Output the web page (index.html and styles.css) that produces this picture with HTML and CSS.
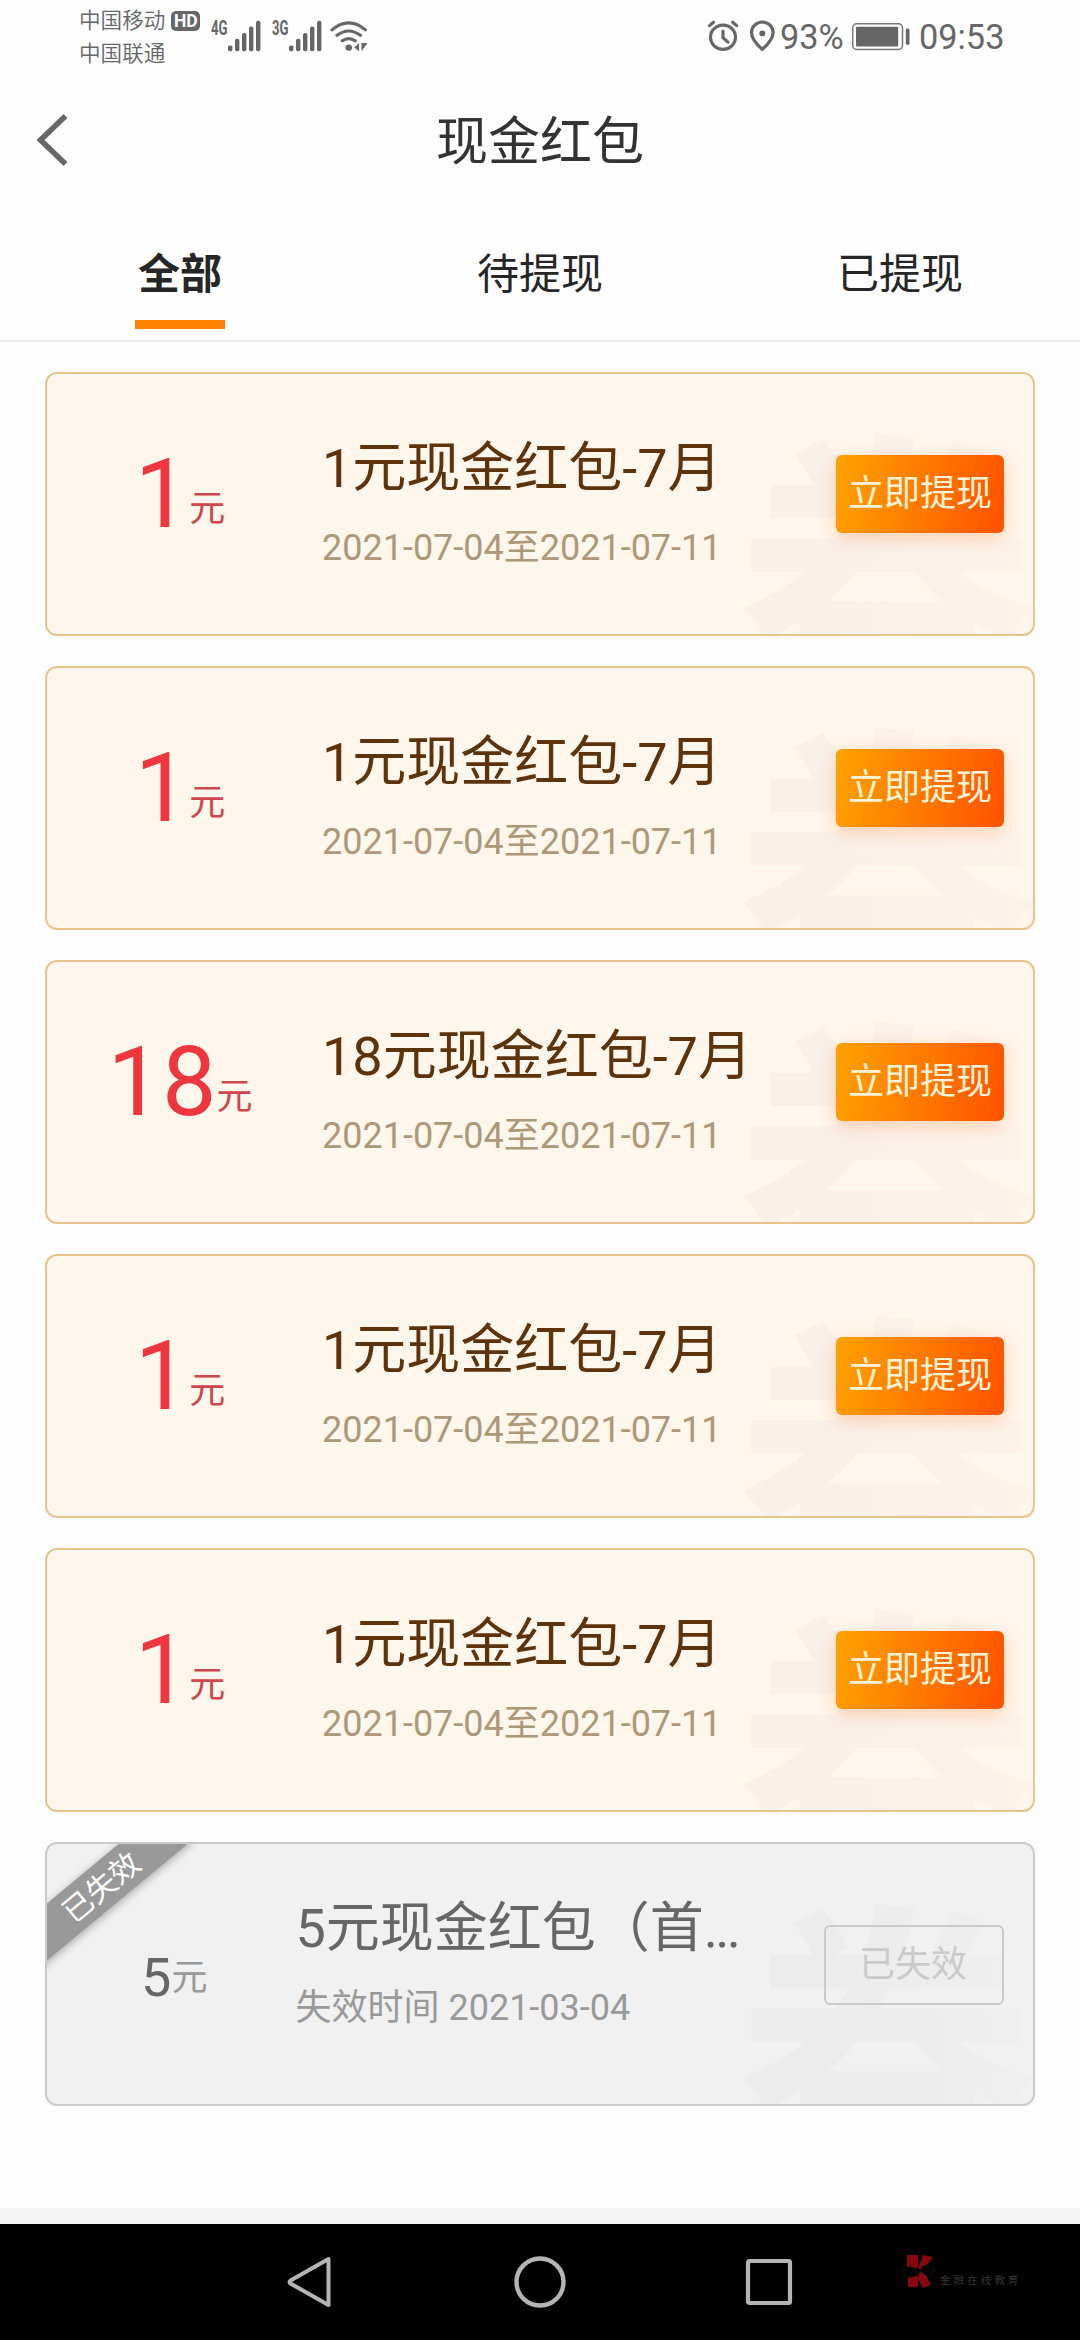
FILE: index.html
```html
<!DOCTYPE html>
<html lang="zh-CN">
<head>
<meta charset="utf-8">
<title>现金红包</title>
<link rel="stylesheet" href="styles.css">
</head>
<body>
<div class="screen">
  <header class="status">
    <div class="carriers">
      <div class="carrier">中国移动<span class="hd">HD</span></div>
      <div class="carrier">中国联通</div>
    </div>
    <svg class="signals" width="160" height="36" viewBox="210 20.66 160 37.2" preserveAspectRatio="none">
      <g fill="#666">
        <text class="net" x="211" y="35.8" textLength="16.5" lengthAdjust="spacingAndGlyphs">4G</text>
        <text class="net" x="272" y="35.8" textLength="16.5" lengthAdjust="spacingAndGlyphs">3G</text>
        <rect x="228" y="47" width="4.4" height="6" rx="1.8"/><rect x="235" y="40" width="4.4" height="13" rx="1.8"/><rect x="242" y="34" width="4.4" height="19" rx="1.8"/><rect x="249" y="27.5" width="4.4" height="25.5" rx="1.8"/><rect x="256" y="21.5" width="4.4" height="31.5" rx="1.8"/>
        <rect x="289" y="47" width="4.4" height="6" rx="1.8"/><rect x="296" y="40" width="4.4" height="13" rx="1.8"/><rect x="303" y="34" width="4.4" height="19" rx="1.8"/><rect x="310" y="27.5" width="4.4" height="25.5" rx="1.8"/><rect x="317" y="21.5" width="4.4" height="31.5" rx="1.8"/>
        <circle cx="348.7" cy="49.2" r="3.3"/>
        <path d="M354.3 49.2l4.8-4.7v8.5zM361.5 44.500h6l-6 8.500z"/>
      </g>
      <g fill="none" stroke="#666" stroke-width="3.2" stroke-linecap="round">
        <path d="M332 30.800Q348.700 16.500 365.400 30.800M337 36.500Q348.700 27.500 360.400 36.500M342.300 42.200Q348.700 37.500 355.200 42.200"/>
      </g>
    </svg>
    <svg class="indicators" width="72" height="36" viewBox="706 20.66 72 37.2" preserveAspectRatio="none" fill="none" stroke="#666" stroke-width="3.2" stroke-linecap="round">
      <circle cx="723" cy="38.5" r="12.5" stroke-width="3.2"/>
      <path d="M723 32v7l5 4.500"/>
      <path d="M709.500 26.500l4-3.500M736.700 26.500l-4-3.500"/>
      <path d="M762.300 51Q751.500 41 751.500 33.500A10.800 10.800 0 0 1 773.100 33.500Q773.100 41 762.300 51z"/>
      <circle cx="762.300" cy="34.500" r="3" fill="#666" stroke="none"/>
    </svg>
    <span class="percent">93%</span>
    <svg class="battery" width="60" height="28" viewBox="851 23 60 28">
      <rect x="852.7" y="23.8" width="49.8" height="25.6" rx="4" fill="none" stroke="#777" stroke-width="1.5"/>
      <rect x="856" y="26.700" width="42.200" height="19.700" rx="1" fill="#666"/>
      <rect x="905.800" y="28.500" width="3.700" height="16.300" rx="1.500" fill="#666"/>
    </svg>
    <span class="clock">09:53</span>
  </header>

  <nav class="titlebar">
    <svg class="back" width="36" height="58" viewBox="0 0 36 58"><path d="M30.500 5L5.500 29l25 24" fill="none" stroke="#666" stroke-width="5.500"/></svg>
    <h1 class="title">现金红包</h1>
  </nav>

  <div class="tabs">
    <div class="tab active">全部</div>
    <div class="tab">待提现</div>
    <div class="tab">已提现</div>
  </div>

  <main class="list">
    <article class="card">
      <span class="mark">券</span>
      <div class="amount">1<small>元</small></div>
      <div class="info"><h2>1元现金红包-7月</h2><p>2021-07-04至2021-07-11</p></div>
      <button class="btn">立即提现</button>
    </article>
    <article class="card">
      <span class="mark">券</span>
      <div class="amount">1<small>元</small></div>
      <div class="info"><h2>1元现金红包-7月</h2><p>2021-07-04至2021-07-11</p></div>
      <button class="btn">立即提现</button>
    </article>
    <article class="card">
      <span class="mark">券</span>
      <div class="amount">18<small>元</small></div>
      <div class="info"><h2>18元现金红包-7月</h2><p>2021-07-04至2021-07-11</p></div>
      <button class="btn">立即提现</button>
    </article>
    <article class="card">
      <span class="mark">券</span>
      <div class="amount">1<small>元</small></div>
      <div class="info"><h2>1元现金红包-7月</h2><p>2021-07-04至2021-07-11</p></div>
      <button class="btn">立即提现</button>
    </article>
    <article class="card">
      <span class="mark">券</span>
      <div class="amount">1<small>元</small></div>
      <div class="info"><h2>1元现金红包-7月</h2><p>2021-07-04至2021-07-11</p></div>
      <button class="btn">立即提现</button>
    </article>
    <article class="card expired">
      <span class="mark">券</span>
      <span class="ribbon">已失效</span>
      <div class="amount">5<small>元</small></div>
      <div class="info"><h2>5元现金红包（首<span class="dots">...</span></h2><p>失效时间 2021-03-04</p></div>
      <button class="btn">已失效</button>
    </article>
  </main>

  <div class="strip"></div>
  <footer class="navbar">
    <svg width="56" height="56" viewBox="0 0 56 56"><path d="M45.500 5v46L7.500 29.500q-2-1.500 0-3z" fill="none" stroke="#b4b4b4" stroke-width="4" stroke-linejoin="round"/></svg>
    <svg width="56" height="56" viewBox="0 0 56 56"><circle cx="28" cy="28" r="23.500" fill="none" stroke="#b4b4b4" stroke-width="4.400"/></svg>
    <svg width="56" height="56" viewBox="0 0 56 56"><rect x="7" y="7" width="42" height="42" rx="1.500" fill="none" stroke="#b4b4b4" stroke-width="4.200"/></svg>
    <div class="brand">
      <svg width="34" height="36" viewBox="0 0 34 36">
        <path d="M4 1h11v13H4zM20 1l10 2-9 12h-6zM5 23l6-2 4 2v10H5zM16 19l5-2 7 14-8 3-5-9z" fill="#87080c"/>
        <ellipse cx="7" cy="18" rx="6.500" ry="5.200" fill="#000" stroke="#161616"/>
        <ellipse cx="24.500" cy="16" rx="6.500" ry="5" fill="#000" stroke="#161616"/>
      </svg>
      <span>金融在线教育</span>
    </div>
  </footer>
</div>
</body>
</html>
```
FILE: styles.css
```css
* { box-sizing: border-box; }

body {
  margin: 0;
  background: #fff;
  font-family: Roboto, "Noto Sans CJK SC", sans-serif;
  color: #333;
}

h1, h2, p { margin: 0; font-weight: 400; white-space: nowrap; }

.screen {
  display: flex;
  flex-direction: column;
  width: 1080px;
  height: 2340px;
  overflow: hidden;
  background: #fefefe;
}

/* status bar */
.status {
  display: flex;
  align-items: flex-start;
  height: 70px;
  padding: 4px 0 0 79px;
  color: #666;
}

.carriers { width: 131px; font-size: 21.6px; font-weight: 350; }
.carrier { display: flex; align-items: center; height: 33px; line-height: 33px; white-space: nowrap; }

.hd {
  width: 29px;
  height: 20px;
  margin-left: 6px;
  border-radius: 5px;
  background: #666;
  color: #fff;
  font-size: 17.5px;
  font-weight: 700;
  line-height: 20px;
  text-align: center;
}

.net { font: 700 20px Roboto, sans-serif; }
.signals { margin-top: 16px; }
.indicators { margin: 16px 0 0 336px; }

.percent, .clock {
  margin-top: 12px;
  font-size: 34.3px;
  line-height: 42px;
  white-space: nowrap;
}
.percent { width: 71px; padding-left: 2px; }
.battery { margin: 19px 8px 0 2px; }

/* title bar */
.titlebar {
  display: grid;
  grid-template-columns: 200px 1fr 200px;
  align-items: center;
  height: 146px;
}
.back { margin: -7px 0 0 35px; }
.title { font-size: 52px; line-height: 60px; text-align: center; }

/* tabs */
.tabs {
  display: grid;
  grid-template-columns: repeat(3, 1fr);
  justify-items: center;
  height: 124px;
  padding-top: 15px;
  color: #262626;
  font-size: 42px;
  line-height: 88px;
}
.tab { display: flex; justify-content: center; width: 90px; height: 98px; white-space: nowrap; }
.tab.active { border-bottom: 9px solid #ff8200; font-weight: 700; }

/* red packet cards */
.list {
  display: flex;
  flex-direction: column;
  gap: 30px;
  height: 1868px;
  padding: 30px 45px 0;
  border-top: 2px solid #ececec;
}

.card {
  position: relative;
  display: flex;
  align-items: flex-start;
  flex: none;
  height: 264px;
  overflow: hidden;
  border: 2px solid #e9c38c;
  border-radius: 12px;
  background: #fff6ec;
}

.mark {
  position: absolute;
  left: 688px;
  top: 35px;
  background: linear-gradient(90deg, #f9f0ea 30%, #fdf3e9);
  background-clip: text;
  -webkit-background-clip: text;
  color: transparent;
  font: 700 304px/304px "Noto Sans CJK SC", sans-serif;
  transform: scaleY(1.032);
  transform-origin: 0 0;
}

.amount {
  width: 275px;
  padding: 70px 9px 0 0;
  color: #ee363e;
  font-size: 97px;
  line-height: 100px;
  text-align: center;
  white-space: nowrap;
}
.amount small { color: #ce474c; font-size: 36px; line-height: 36px; vertical-align: 6px; }

.info { flex: 1; padding-top: 57px; }
.info h2 { color: #5e320a; font-size: 54px; line-height: 76px; }
.info p { margin-top: 15px; color: #ae9878; font-size: 36px; line-height: 52px; }

.btn {
  position: relative;
  width: 168px;
  height: 78px;
  margin: 81px 29px 0 0;
  padding: 0;
  border: 0;
  border-radius: 6px;
  background: linear-gradient(100deg, #ffa200, #ff5200);
  box-shadow: 0 5px 18px rgba(255, 112, 20, .28);
  color: #fff3d6;
  font: 400 36px/78px Roboto, "Noto Sans CJK SC", sans-serif;
  white-space: nowrap;
}

/* expired card */
.expired { border-color: #cacaca; background: #f1f1f1; }
.expired .mark { background-image: linear-gradient(90deg, #ececec 30%, #efefef); }
.expired .amount { width: 248.5px; padding: 84px 0 0 6px; color: #666; font-size: 54px; }
.expired .amount small { color: #999; vertical-align: 6px; }
.expired .info { padding-top: 47px; }
.expired .info h2 { color: #666; }
.expired .info p { color: #999; }
.dots { letter-spacing: -2.8px; }
.expired .btn {
  width: 180px;
  height: 80px;
  padding-right: 2px;
  border: 2px solid #cacaca;
  background: none;
  box-shadow: none;
  color: #cacaca;
  line-height: 76px;
}

.ribbon {
  position: absolute;
  left: -47px;
  top: 22px;
  width: 200px;
  height: 44px;
  padding-left: 3px;
  background: #999;
  box-shadow: 0 2px 8px rgba(0, 0, 0, .3);
  color: #fff;
  font-size: 30px;
  line-height: 46px;
  text-align: center;
  transform: rotate(-39.7deg);
}

/* system navigation */
.strip { height: 16px; background: #f5f5f5; flex: none; }
.navbar {
  display: flex;
  flex: none;
  height: 116px;
  padding: 30px 0 0 283px;
  background: #000;
}
.navbar > svg { margin-right: 173px; flex: none; }
.navbar > svg:nth-of-type(3) { margin-right: 106px; }
.brand { display: flex; align-items: flex-start; }
.brand span { margin: 19px 0 0 3px; color: #353535; font-size: 10.5px; line-height: 16px; letter-spacing: 3.1px; white-space: nowrap; }
```
